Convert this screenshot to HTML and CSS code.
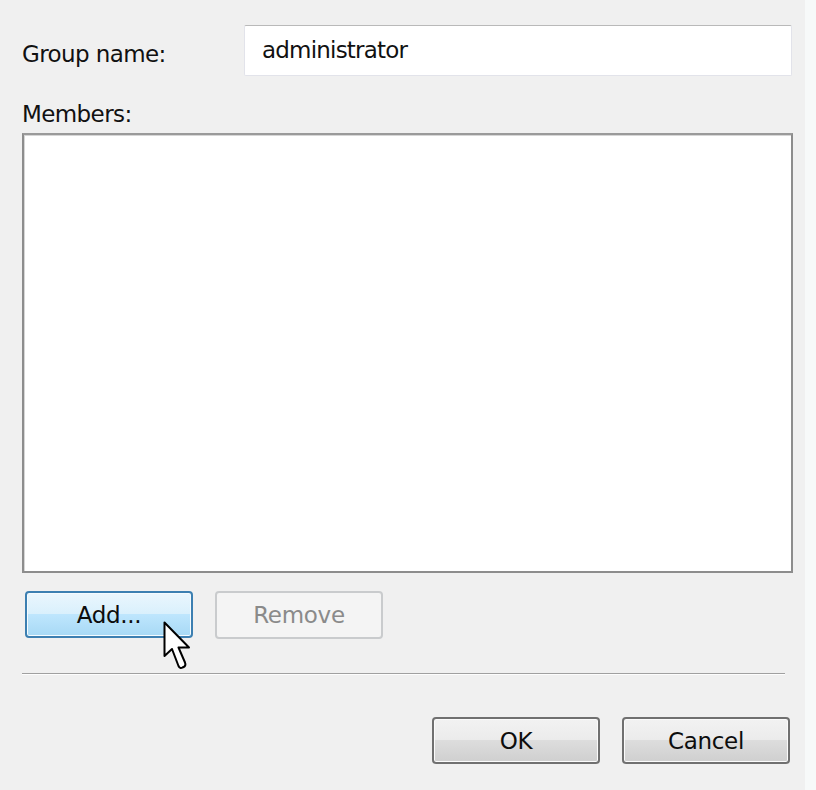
FILE: index.html
```html
<!DOCTYPE html>
<html>
<head>
<meta charset="utf-8">
<link rel="stylesheet" href="styles.css">
</head>
<body>
<div class="dialog">
  <div class="name-row">
    <label class="label name-label">Group name:</label>
    <div class="textbox">administrator</div>
  </div>
  <div class="label members-label">Members:</div>
  <div class="listbox"></div>
  <div class="list-buttons">
    <div class="btn btn-hot">Add...
      <svg class="cursor" width="34" height="50" viewBox="0 0 34 50">
        <path d="M1.5 1.5 L1.5 35 L9 28 L15.5 45 Q17 48 19.5 46.5 L21.5 45.5 Q23 44 22 41.5 L15.5 26.5 L26 26.5 Z" fill="#fff" stroke="#000" stroke-width="2" stroke-linejoin="round"/>
      </svg>
    </div>
    <div class="btn btn-disabled">Remove</div>
  </div>
  <div class="separator"></div>
  <div class="dialog-buttons">
    <div class="btn btn-normal">OK</div>
    <div class="btn btn-normal">Cancel</div>
  </div>
</div>
</body>
</html>
```

FILE: styles.css
```css
html, body {
  margin: 0;
  padding: 0;
}
body {
  width: 816px;
  height: 790px;
  overflow: hidden;
  background: linear-gradient(to right, #f0f0f0 0, #f0f0f0 805px, #f7f9f9 805px);
  font-family: "DejaVu Sans", "Liberation Sans", sans-serif;
  font-size: 23px;
  color: #111;
}
.dialog {
  padding: 25px 23px 0 22px;
  display: flex;
  flex-direction: column;
}
.name-row {
  display: grid;
  grid-template-columns: 222px 1fr;
  align-items: start;
  margin-right: 1px;
}
.label {
  line-height: 26px;
  letter-spacing: -0.6px;
}
.name-label {
  padding-top: 16px;
}
.textbox {
  height: 51px;
  box-sizing: border-box;
  background: #fff;
  border: 1px solid #e2e3ea;
  border-top-color: #b9b9b9;
  border-radius: 2px;
  padding: 11px 17px 0;
  line-height: 26px;
  letter-spacing: -0.8px;
}
.members-label {
  margin-top: 25px;
}
.listbox {
  margin-top: 6px;
  height: 440px;
  box-sizing: border-box;
  background: #fff;
  border: 2px solid #8d8d8d;
  border-top-color: #9a9a9a;
  box-shadow: inset 1px 1px 0 #d6d6d6;
}
.list-buttons {
  display: flex;
  gap: 22px;
  margin-top: 18px;
  padding-left: 3px;
}
.btn {
  position: relative;
  width: 168px;
  height: 47px;
  box-sizing: border-box;
  border-radius: 4px;
  display: flex;
  align-items: center;
  justify-content: center;
  letter-spacing: -0.3px;
}
.btn-hot {
  border: 2px solid #3c7fb1;
  background: linear-gradient(to bottom, #eaf6fd 0%, #d9f0fc 50%, #bee6fd 50%, #a7d9f5 100%);
  box-shadow: inset 0 0 0 1px #f4fbff;
  color: #0d0d0d;
}
.btn-disabled {
  border: 2px solid #c9cbcd;
  background: #f4f4f4;
  color: #8a8a8a;
  height: 48px;
}
.btn-normal {
  border: 2px solid #707070;
  background: linear-gradient(to bottom, #f2f2f2 0%, #ebebeb 50%, #dddddd 50%, #cfcfcf 100%);
  box-shadow: inset 0 0 0 1px #fbfbfb;
  color: #0d0d0d;
}
.cursor {
  position: absolute;
  left: 136px;
  top: 28px;
  z-index: 2;
}
.separator {
  margin-top: 34px;
  margin-right: 8px;
  height: 1px;
  background: #a0a0a0;
  box-shadow: 0 1px 0 #fdfdfd;
}
.dialog-buttons {
  display: flex;
  justify-content: flex-end;
  gap: 22px;
  margin-top: 43px;
  margin-right: 3px;
}
```
